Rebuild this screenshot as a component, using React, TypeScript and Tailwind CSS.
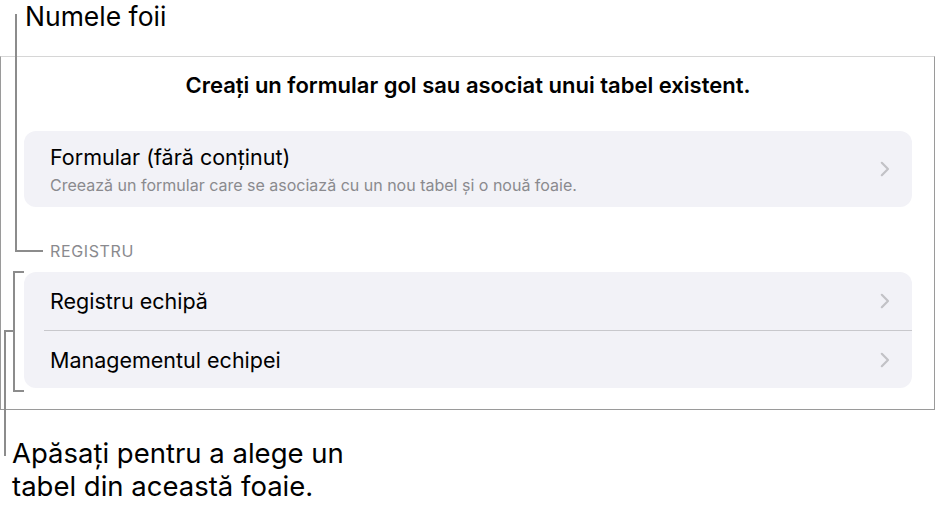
const font = { fontFamily: "Inter, 'Noto Sans', sans-serif" };

function Chevron() {
  return (
    <svg width="10" height="16" viewBox="0 0 10 16" className="shrink-0 mr-[22px]">
      <polyline points="1.8,1.8 8,8 1.8,14.2" fill="none" stroke="#c2c2c6" strokeWidth="2.2" strokeLinecap="round" strokeLinejoin="round" />
    </svg>
  );
}

function Row({ title, sub }: { title: string; sub?: string }) {
  return (
    <div className="flex items-center justify-between h-full pl-[26px]">
      <div className="flex flex-col">
        <span className="text-[21.5px] leading-[28px] text-black">{title}</span>
        {sub && <span className="text-[16px] leading-[20px] text-[#8a8a8e] mt-[4px]">{sub}</span>}
      </div>
      <Chevron />
    </div>
  );
}

export default function App() {
  return (
    <div className="relative w-[935px] h-[513px] bg-white overflow-hidden" style={font}>
      <div className="h-[56px] pl-[25px] text-[26.5px] leading-[32px] text-black">Numele foii</div>

      <div className="w-[935px] h-[354px] border-t border-t-[#d6d6d6] border-l-[1.5px] border-r-[1.5px] border-b-[1.5px] border-[#9a9a9a] bg-white pl-[23px] pr-[22px]">
        <h1 className="text-center font-semibold text-[22px] leading-[28px] text-black pt-[14px] mb-[32px]">
          Creați un formular gol sau asociat unui tabel existent.
        </h1>

        <div className="h-[76px] rounded-[12px] bg-[#f2f2f7]">
          <Row title="Formular (fără conținut)" sub="Creează un formular care se asociază cu un nou tabel și o nouă foaie." />
        </div>

        <div className="mt-[34px] mb-[11px] pl-[26px] text-[16px] leading-[20px] text-[#8a8a8e] tracking-[0.04em]">REGISTRU</div>

        <div className="rounded-[12px] bg-[#f2f2f7]">
          <div className="h-[58px]">
            <Row title="Registru echipă" />
          </div>
          <div className="ml-[20px] h-px bg-[#c8c8cc]" />
          <div className="h-[57px]">
            <Row title="Managementul echipei" />
          </div>
        </div>
      </div>

      <div className="pl-[12px] pt-[27px] text-[27.5px] leading-[33px] text-black">
        Apăsați pentru a alege un
        <br />
        tabel din această foaie.
      </div>

      {/* callout lines */}
      <div className="absolute left-[15px] top-[14px] w-[2px] h-[238px] bg-[#8c8c8c]" />
      <div className="absolute left-[15px] top-[250px] w-[28px] h-[2px] bg-[#8c8c8c]" />

      <div className="absolute left-[13px] top-[271px] w-[11px] h-[121px] border-l-2 border-t-2 border-b-2 border-[#8c8c8c]" />
      <div className="absolute left-[4px] top-[330px] w-[10px] h-[2px] bg-[#8c8c8c]" />
      <div className="absolute left-[4px] top-[330px] w-[2px] h-[126px] bg-[#8c8c8c]" />
    </div>
  );
}
